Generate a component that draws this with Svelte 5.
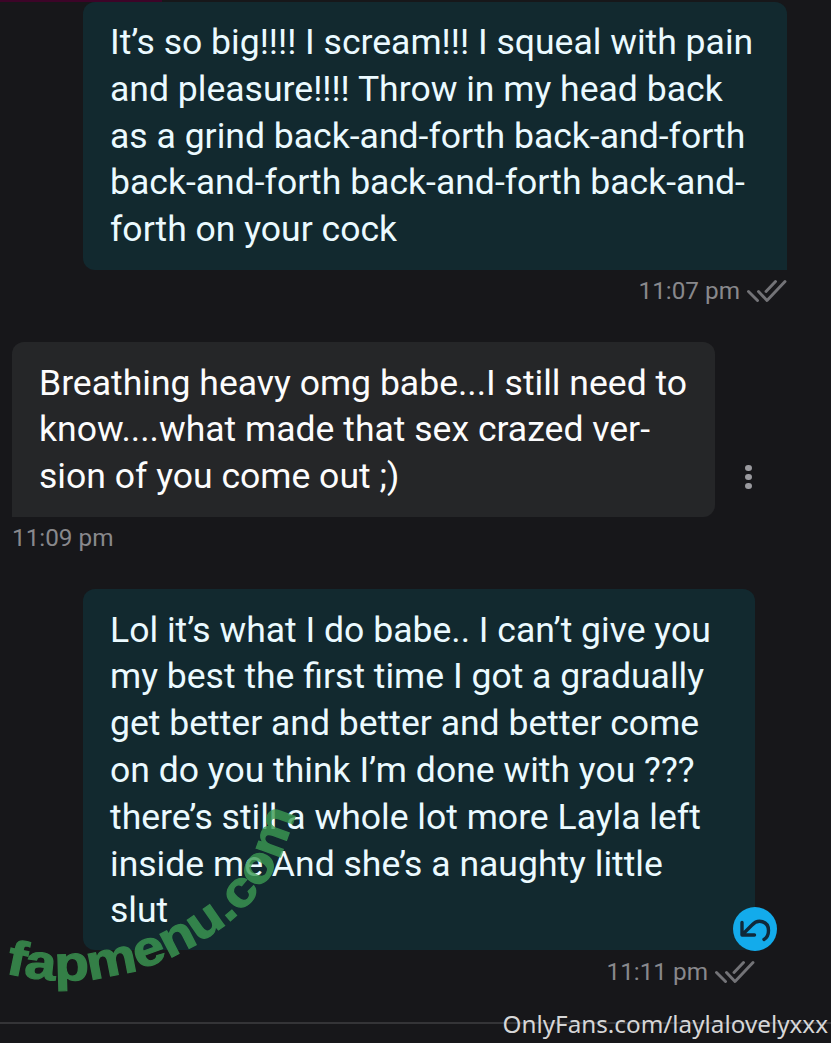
<script>
  const messages = [
    {
      side: 'sent',
      time: '11:07 pm',
      lines: [
        'It’s so big!!!! I scream!!! I squeal with pain',
        'and pleasure!!!! Throw in my head back',
        'as a grind back-and-forth back-and-forth',
        'back-and-forth back-and-forth back-and-',
        'forth on your cock'
      ]
    },
    {
      side: 'received',
      time: '11:09 pm',
      lines: [
        'Breathing heavy omg babe...I still need to',
        'know....what made that sex crazed ver-',
        'sion of you come out ;)'
      ]
    },
    {
      side: 'sent',
      time: '11:11 pm',
      reply: true,
      lines: [
        'Lol it’s what I do babe.. I can’t give you',
        'my best the first time I got a gradually',
        'get better and better and better come',
        'on do you think I’m done with you ???',
        'there’s still a whole lot more Layla left',
        'inside me And she’s a naughty little',
        'slut'
      ]
    }
  ];
</script>

<main class="chat">
  <div class="accent"></div>
  {#each messages as m}
    <section class="message {m.side}" class:short={m.reply}>
      <div class="row">
        <div class="bubble">
          {#each m.lines as text}
            <span class="line">{text}</span>
          {/each}
          {#if m.reply}
            <span class="badge">
              <svg viewBox="0 0 44 44" width="44" height="44" fill="none" stroke="#10293a" stroke-width="3.4" stroke-linecap="round" stroke-linejoin="round">
                <path d="M9 15.500v12.500h12.500M9.500 27.500L19 18C25 11.500 35.500 14 35.500 23.500C35.500 28 33.500 31 31 32.500" />
              </svg>
            </span>
          {/if}
        </div>
        {#if m.side === 'received'}
          <div class="dots"><i></i><i></i><i></i></div>
        {/if}
      </div>
      <div class="meta">
        <span>{m.time}</span>
        {#if m.side === 'sent'}
          <svg viewBox="0 0 40 24" width="40" height="24" fill="none" stroke="#737377" stroke-width="2.900" stroke-linecap="round" stroke-linejoin="round">
            <path d="M1.500 12.500L10.500 21.500M11.500 12.500L20 21.500L38 2.500M19 12.500L28.500 2.500" />
          </svg>
        {/if}
      </div>
    </section>
  {/each}
  <div class="divider"></div>
  <svg class="stamp" viewBox="0 0 320 210" width="320" height="210">
    <path id="arc" d="M5 183C95 205 178 174 230 131C267 101 284 66 298 14" fill="none" />
    <text><textPath href="#arc" textLength="368" lengthAdjust="spacingAndGlyphs">fapmenu.com</textPath></text>
  </svg>
  <div class="handle">OnlyFans.com/laylalovelyxxx</div>
</main>

<style>
  :global(body) { margin: 0; background: #17171a; }
  .chat {
    position: relative;
    box-sizing: border-box;
    width: 831px;
    height: 1043px;
    padding-top: 2px;
    overflow: hidden;
    background: #17171a;
    font-family: Roboto, sans-serif;
  }
  .accent {
    position: absolute;
    top: 0;
    left: 0;
    width: 162px;
    height: 2px;
    background: #3d0428;
  }
  .message { display: flex; flex-direction: column; }
  .sent { margin-left: 83px; width: 704px; height: 340px; }
  .sent.short { width: 672px; height: 434px; }
  .received { margin-left: 12px; height: 247px; }
  .row { display: flex; align-items: flex-end; }
  .bubble {
    position: relative;
    box-sizing: border-box;
    width: 100%;
    height: 268px;
    padding: 17px 27px;
    border-radius: 12px 12px 0 12px;
    background: #12292f;
    color: #ebfaff;
    font-size: 35.550px;
    line-height: 46.800px;
  }
  .short .bubble { height: 361px; padding-top: 17.700px; }
  .received .bubble {
    width: 703px;
    height: 175px;
    padding-top: 17.700px;
    border-radius: 12px 12px 12px 0;
    background: #252628;
    color: #fcfcfd;
  }
  .line { display: block; width: max-content; white-space: pre; }
  .meta {
    display: flex;
    justify-content: flex-end;
    align-items: center;
    gap: 7px;
    height: 41px;
    color: #88888c;
    font-size: 24.300px;
  }
  .short .meta { height: 43px; }
  .received .meta { justify-content: flex-start; }
  .dots {
    display: flex;
    flex-direction: column;
    gap: 3px;
    margin: 0 0 28px 30px;
  }
  .dots i { width: 6.500px; height: 6px; border-radius: 50%; background: #9a9a9f; }
  .badge {
    position: absolute;
    right: -22px;
    bottom: -1px;
    width: 44px;
    height: 44px;
    border-radius: 50%;
    background: #13abeb;
  }
  .badge svg { display: block; }
  .divider {
    position: absolute;
    left: 0;
    top: 1022px;
    width: 831px;
    height: 2px;
    background: #343437;
  }
  .stamp { position: absolute; left: 0; top: 790px; }
  .stamp text {
    font-family: "Liberation Sans", sans-serif;
    font-size: 49px;
    font-weight: 700;
    fill: #3c9a53;
    stroke: #3c9a53;
    stroke-width: 1.200px;
    opacity: 0.800;
  }
  .handle {
    position: absolute;
    right: 3px;
    top: 1008px;
    color: #d6d6d7;
    font-family: "Noto Sans", sans-serif;
    font-size: 24.250px;
    line-height: 32px;
    white-space: nowrap;
  }
</style>
